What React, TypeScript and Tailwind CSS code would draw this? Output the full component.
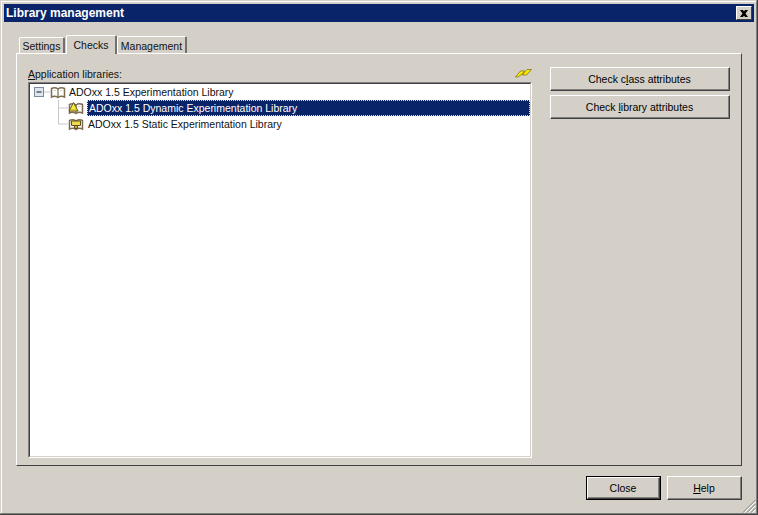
import React from "react"

const raised = "border-t border-l border-t-white border-l-white border-r border-b border-r-[#404040] border-b-[#404040]"
const raisedInner = "border-r border-b border-r-[#808080] border-b-[#808080]"

function Btn({ children, isDefault, className }: { children: React.ReactNode; isDefault?: boolean; className: string }) {
  return (
    <div className={`${className} ${isDefault ? "border border-black" : ""} flex`}>
      <div className={`flex-1 flex ${raised}`}>
        <div className={`flex-1 flex items-center justify-center pt-px text-black ${raisedInner}`}>
          <span>{children}</span>
        </div>
      </div>
    </div>
  )
}

function Tab({ label, active, className }: { label: string; active?: boolean; className: string }) {
  return (
    <div className={`${className} rounded-t-[2px] border-t border-l border-t-white border-l-white border-r-2 border-r-[#707070] flex items-center justify-center bg-[#d4d0c8] ${active ? "relative z-10 -mb-px" : ""}`}>
      {label}
    </div>
  )
}

function Book({ kind }: { kind?: "warn" | "static" }) {
  return (
    <svg width="16" height="13" viewBox="0 0 16 13" className="shrink-0">
      <path d="M1.500 2.500C3.500 1.500 6 1.500 8 3C10 1.500 12.500 1.500 14.500 2.500V11C12.500 10 10 10 8 11.500C6 10 3.500 10 1.500 11Z" fill="#fff" stroke="#7d6c50" strokeWidth="1.500" />
      <path d="M8 3v8.500" stroke="#7d6c50" strokeWidth="1.200" />
      <path d="M3.500 4.500h2.500M10 4.500h2.500" stroke="#d8d0c0" />
      {kind === "warn" && (
        <>
          <path d="M5.500 0.500l4.500 8.500H1z" fill="#f8ea30" stroke="#5c5520" />
          <path d="M2.500 8h6" stroke="#c8a020" />
        </>
      )}
      {kind === "static" && (
        <>
          <path d="M3.500 3h9v4.500H3.500z" fill="#f0dc4a" stroke="#5c5020" />
          <path d="M6.500 7.500h3v3H6.500z" fill="#c8a830" stroke="#5c5020" />
        </>
      )}
    </svg>
  )
}

export default function App() {
  return (
    <div className="w-[758px] h-[515px] bg-[#d4d0c8] relative flex flex-col text-[10.5px] leading-none text-[#111] overflow-hidden border-b border-r border-b-[#404040] border-r-[#404040]" style={{ fontFamily: '"Liberation Sans", Arial, sans-serif' }}>
      <div className="flex-1 flex flex-col border-t border-l border-t-[#d4d0c8] border-l-[#d4d0c8] border-r border-b border-r-[#808080] border-b-[#808080]">
        <div className="flex-1 flex flex-col border-t border-l border-t-white border-l-white p-[2px]">
          <div className="h-[18px] bg-[#0a246a] flex items-center justify-between pl-[2px] pr-[2px] text-white font-bold text-[12px]">
            <span>Library management</span>
            <div className="w-4 h-[14px] bg-[#d4d0c8] border-t border-l border-t-white border-l-white border-r border-b border-r-[#404040] border-b-[#404040] flex items-center justify-center">
              <svg width="8" height="7" viewBox="0 0 8 7">
                <path d="M0 0l3 0 1 1.500 1-1.500 3 0-2.500 3.500 2.500 3.500h-3l-1-1.500-1 1.500h-3l2.500-3.500z" fill="#000" />
              </svg>
            </div>
          </div>

          <div className="flex items-end h-[19px] mt-[12px] ml-[15px]">
            <Tab label="Settings" className="w-[46px] h-[16px] mr-px pt-[2px]" />
            <Tab label="Checks" active className="w-[51px] h-[19px]" />
            <Tab label="Management" className="w-[70px] h-[17px] pt-[2px]" />
          </div>

          <div className="ml-[12px] mr-[12px] h-[413px] border-t border-l border-t-white border-l-white border-r border-b border-r-[#404040] border-b-[#404040] flex gap-[18px] pl-[11px] pt-[13px]">
            <div className="w-[504px] flex flex-col">
              <div className="h-[15px] flex items-start justify-between">
                <span className="pt-[2px]"><span className="underline">A</span>pplication libraries:</span>
                <svg width="17" height="11" viewBox="0 0 17 11" className="-ml-px">
                  <path d="M0.500 10L5.500 4H9.500L8.500 6L12 2.500H16.500L11.500 8H7.500L8.500 6L3 10z" fill="#ffe800" stroke="#6e6a10" strokeWidth="0.700" />
                </svg>
              </div>
              <div className="h-[376px] flex border-t border-l border-t-[#808080] border-l-[#808080] border-r border-b border-r-white border-b-white">
                <div className="flex-1 bg-white border-t border-l border-t-[#404040] border-l-[#404040] border-r border-b border-r-[#d4d0c8] border-b-[#d4d0c8] flex flex-col text-[#111]">
                  <div className="h-4 flex items-center pl-[4px]">
                    <svg width="16" height="16" viewBox="0 0 16 16" className="shrink-0">
                      <rect x="0.500" y="3.500" width="9" height="9" fill="#dfe6ee" stroke="#7a8aa0" />
                      <path d="M2.500 8h5" stroke="#111" />
                      <path d="M10 8h6" stroke="#c8c8c8" />
                    </svg>
                    <Book />
                    <span className="ml-[3px]">ADOxx 1.5 Experimentation Library</span>
                  </div>
                  <div className="h-4 flex items-center">
                    <svg width="10" height="16" viewBox="0 0 10 16" className="shrink-0 ml-[28px]">
                      <path d="M0.500 0v16M0.500 8H10" stroke="#c8c8c8" fill="none" />
                    </svg>
                    <div className="mr-[3px]"><Book kind="warn" /></div>
                    <div className="flex-1 h-4 bg-[#0a246a] text-white flex items-center pl-px border border-dotted border-[#e8e0b0]">
                      ADOxx 1.5 Dynamic Experimentation Library
                    </div>
                  </div>
                  <div className="h-4 flex items-center">
                    <svg width="10" height="16" viewBox="0 0 10 16" className="shrink-0 ml-[28px]">
                      <path d="M0.500 0v8H10" stroke="#c8c8c8" fill="none" />
                    </svg>
                    <div className="mr-[4px]"><Book kind="static" /></div>
                    <span>ADOxx 1.5 Static Experimentation Library</span>
                  </div>
                </div>
              </div>
            </div>

            <div className="w-[180px] flex flex-col gap-[4px]">
              <Btn className="w-[180px] h-[24px]">Check c<span className="underline">l</span>ass attributes</Btn>
              <Btn className="w-[180px] h-[24px]">Check <span className="underline">l</span>ibrary attributes</Btn>
            </div>
          </div>

          <div className="flex justify-end gap-[6px] mt-[10px] mr-[12px]">
            <Btn isDefault className="w-[75px] h-[24px]">Close</Btn>
            <Btn className="w-[75px] h-[24px]"><span className="underline">H</span>elp</Btn>
          </div>
        </div>
      </div>
      <svg width="14" height="14" viewBox="0 0 14 14" className="absolute right-[1px] bottom-[1px]">
        <path d="M13.500 1L1 13.500M13.500 5L5 13.500M13.500 9L9 13.500" stroke="#808080" />
        <path d="M13.500 2.500L2.500 13.500M13.500 6.500L6.500 13.500M13.500 10.500L10.500 13.500" stroke="#fff" />
      </svg>
    </div>
  )
}
